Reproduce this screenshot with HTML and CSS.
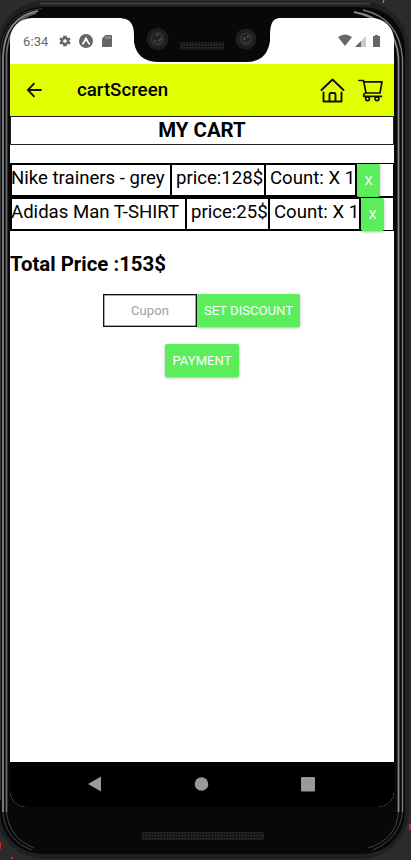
FILE: index.html
```html
<!DOCTYPE html>
<html lang="en">
<head>
<meta charset="utf-8">
<title>cartScreen</title>
<link rel="stylesheet" href="styles.css">
</head>
<body>
<div class="device">
  <svg class="shell" width="411" height="860" viewBox="0 0 411 860" fill="none">
    <defs>
      <pattern id="mesh" width="3" height="3" patternUnits="userSpaceOnUse">
        <rect width="3" height="3" fill="#1c1c1c"/><rect width="1" height="1" fill="#080808"/><rect x="2" y="1" width="1" height="1" fill="#303030"/>
      </pattern>
    </defs>
    <rect width="411" height="860" fill="#2b2b2b"/>
    <path d="M0 842v7M11 858h2M410 824v6" stroke="#c62828" stroke-width="2"/>
    <path d="M384 0l-1 3" stroke="#c79255"/>
    <rect x="-4" y="1" width="413" height="858" rx="48" fill="#202022"/>
    <path d="M40 3.500H370" stroke="#3c3c3e" stroke-width="2"/>
    <rect x="0" y="7" width="405" height="847" rx="42" fill="#080808"/>
    <path d="M.5 800V56Q2 12 42 8.500" stroke="#3a3a3c"/>
    <path d="M3 812V56Q5 17 38 11" stroke="#858587" stroke-width="1.800"/>
    <path d="M6.500 812V54Q9 20 36 13" stroke="#6c6c70" stroke-width="1.800"/>
    <path d="M3 812Q5 840 32 850M6.500 812Q9 838 34 848" stroke="#444447"/>
    <path d="M398.500 812V58Q396 20 354 12" stroke="#88888c" stroke-width="1.800"/>
    <path d="M402.500 812V58Q399 18 363 10" stroke="#747478" stroke-width="1.500"/>
    <path d="M398.500 812Q396 840 368 848M402.500 812Q400 838 373 850" stroke="#444447"/>
    <rect x="141" y="832" width="123" height="8" rx="2" fill="url(#mesh)"/>
  </svg>
  <main class="screen">
    <header class="status">
      <span class="time">6:34</span>
      <svg class="gear" width="14" height="14" viewBox="0 0 24 24" fill="#666"><path d="M19.400 13a7 7 0 0 0 0-2l2.200-1.700-2-3.500-2.600 1a8 8 0 0 0-1.700-1L15 3H9l-.4 2.800a8 8 0 0 0-1.700 1l-2.600-1-2 3.500L4.500 11a7 7 0 0 0 0 2l-2.200 1.700 2 3.500 2.600-1a8 8 0 0 0 1.700 1L9 21h6l.4-2.800a8 8 0 0 0 1.700-1l2.600 1 2-3.500zM12 15.200a3.200 3.200 0 1 1 0-6.400 3.200 3.200 0 0 1 0 6.400z"/></svg>
      <svg class="expo" width="14" height="14" viewBox="0 0 14 14"><circle cx="7" cy="7" r="7" fill="#666"/><path d="M3.800 9.900Q5.200 8.500 7 4.200Q8.800 8.500 10.200 9.900" fill="none" stroke="#fff" stroke-width="1.700" stroke-linecap="round" stroke-linejoin="round"/></svg>
      <svg class="card" width="10" height="12" viewBox="0 0 10 12"><path d="M3.500 0H9q1 0 1 1v10q0 1-1 1H1q-1 0-1-1V3.500z" fill="#666"/><path d="M4 1.500v2M6 1.500v2M8 1.500v2" stroke="#fff" stroke-width=".6"/></svg>
      <svg class="signals" width="44" height="14" viewBox="0 0 44 14"><path d="M0 3Q7-2 14 3L7 12z" fill="#666"/><path d="M17 13L28 2V13z" fill="#c9c9c9"/><path d="M17 13L23 7V13z" fill="#666"/><path d="M35 2h2V1h3v1h2v11h-7z" fill="#666"/></svg>
    </header>
    <nav class="appbar">
      <svg class="back" width="16" height="16" viewBox="0 0 16 16" fill="none" stroke="#111" stroke-width="1.800"><path d="M15.600 8H2M8.500 1.200L1.800 8L8.500 14.800"/></svg>
      <h1>cartScreen</h1>
      <svg class="home" width="25" height="25" viewBox="0 0 25 25" fill="none" stroke="#111" stroke-width="1.900" stroke-linecap="round" stroke-linejoin="round"><path d="M1.500 12L12.500 1.500L23.500 12M3.500 14.500V23.500H21.500V14.500M9.500 23V16.500q0-1.500 1.500-1.500h3q1.500 0 1.500 1.500v6.500"/></svg>
      <svg class="cart" width="25" height="23" viewBox="0 0 25 23" fill="none" stroke="#111" stroke-width="1.700" stroke-linecap="round" stroke-linejoin="round"><path d="M1 1.500H5.500L8 14H22L24 2.800H6M8 14Q5.200 14.500 5.800 17.300H23.500"/><circle cx="9.500" cy="19.800" r="1.900"/><circle cx="19" cy="19.800" r="1.900"/></svg>
    </nav>
    <h2 class="heading">MY CART</h2>
    <section class="items">
      <div class="row first"><span class="name">Nike trainers - grey</span><span class="price">price:128$</span><span class="count">Count: X 1</span><button>X</button></div>
      <div class="row second"><span class="name">Adidas Man T-SHIRT</span><span class="price">price:25$</span><span class="count">Count: X 1</span><button>X</button></div>
    </section>
    <p class="total">Total Price :153$</p>
    <div class="discount"><input type="text" placeholder="Cupon"><button>SET DISCOUNT</button></div>
    <div class="payment"><button>PAYMENT</button></div>
    <footer class="navigation">
      <svg width="384" height="45" viewBox="0 0 384 45" fill="#999"><path d="M78 22L91 14.500V29.500z"/><circle cx="191.500" cy="22" r="6.800"/><rect x="291" y="15" width="14" height="14.500" rx="1"/></svg>
    </footer>
  </main>
  <svg class="notch" width="156" height="53" viewBox="-3 0 156 53">
    <path d="M-3 0V8.500Q9 9 9 25V32Q12 52 34 52H121Q142 52 145 31V25Q145 9 153 8.500V0z" fill="#080808"/>
    <circle cx="32.500" cy="29" r="11" fill="#211e1a"/><circle cx="32.500" cy="29" r="7" fill="#333130"/><circle cx="31.500" cy="28" r="4.500" fill="#222"/><path d="M29 32l2-2M31 26l3-2M34 31l2-3" stroke="#65605c"/>
    <circle cx="121" cy="29" r="10.500" fill="#211e1a"/><circle cx="121" cy="29" r="6.500" fill="#303132"/><circle cx="121" cy="28" r="4" fill="#222"/><path d="M119 30l1-3M122 27l2-1" stroke="#77716d"/>
    <rect x="55" y="32" width="44" height="8" fill="url(#mesh)"/>
  </svg>
</div>
</body>
</html>
```
FILE: styles.css
```css
* { box-sizing: border-box; }
body { margin: 0; font-family: Roboto, "Liberation Sans", sans-serif; color: #000; }
.device { position: relative; width: 411px; height: 860px; padding: 18px 17px 53px 10px; overflow: hidden; }
.shell { position: absolute; inset: 0; }
.notch { position: absolute; left: 122px; top: 10px; }
.screen { position: relative; display: flex; flex-direction: column; width: 384px; height: 789px; background: #fff; border-radius: 22px 22px 16px 16px; overflow: hidden; }
.status { display: flex; align-items: center; height: 46px; flex: none; padding-left: 13px; color: #666; }
.time { width: 35px; font-size: 13px; letter-spacing: .1px; }
.expo { margin-left: 7px; }
.card { margin-left: 9px; }
.signals { margin-left: auto; margin-right: 12px; }
.appbar { display: flex; align-items: center; height: 52px; flex: none; background: #e1ff00; padding: 0 11px 0 16px; }
.appbar h1 { margin: 0 auto 0 35px; font-size: 18.7px; line-height: 24px; font-weight: 500; }
.home { margin-right: 13px; }
.heading { height: 29px; flex: none; margin: 0; border: 1px solid #222; text-align: center; font-size: 20.4px; line-height: 27px; font-weight: 700; }
.items { margin-top: 18px; }
.row { display: flex; height: 34px; border: 1px solid #000; }
.row span { border: 1px solid #000; border-left-width: 0; border-right-width: 2px; font-size: 18.6px; line-height: 26px; white-space: nowrap; }
.row .name { border-left-width: 1px; }
.row .name { padding-left: 0; text-indent: -1px; }
.row .price, .row .count { padding-left: 4px; }
.first .name { width: 161px; }
.first .price { width: 94px; }
.first .count { width: 91px; }
.second .name { width: 176px; }
.second .price { width: 83px; }
.second .count { width: 91px; }
button { border: 0; border-radius: 2px; padding: 0; background: #5bed5b; color: #fff; font-family: inherit; font-size: 13.1px; box-shadow: 0 1px 3px rgba(0,0,0,.3); }
.row button { width: 23px; height: 33px; }
.total { margin: 20px 0 0; font-size: 20.4px; line-height: 26px; font-weight: 700; }
.discount { display: flex; margin: 17px 0 0 93px; }
input { width: 94px; height: 33px; border: 1px solid #111; border-radius: 0; padding: 0; font-family: inherit; font-size: 13.1px; text-align: center; background: #fff; box-shadow: inset 0 0 0 .5px #555; }
input::placeholder { color: #a1a1a1; opacity: 1; }
.discount button { width: 103px; height: 33px; }
.payment { margin: 17px 0 0 155px; }
.payment button { display: block; width: 74px; height: 33px; }
.navigation { margin-top: auto; height: 45px; background: #000; }
.navigation svg { display: block; }
```
